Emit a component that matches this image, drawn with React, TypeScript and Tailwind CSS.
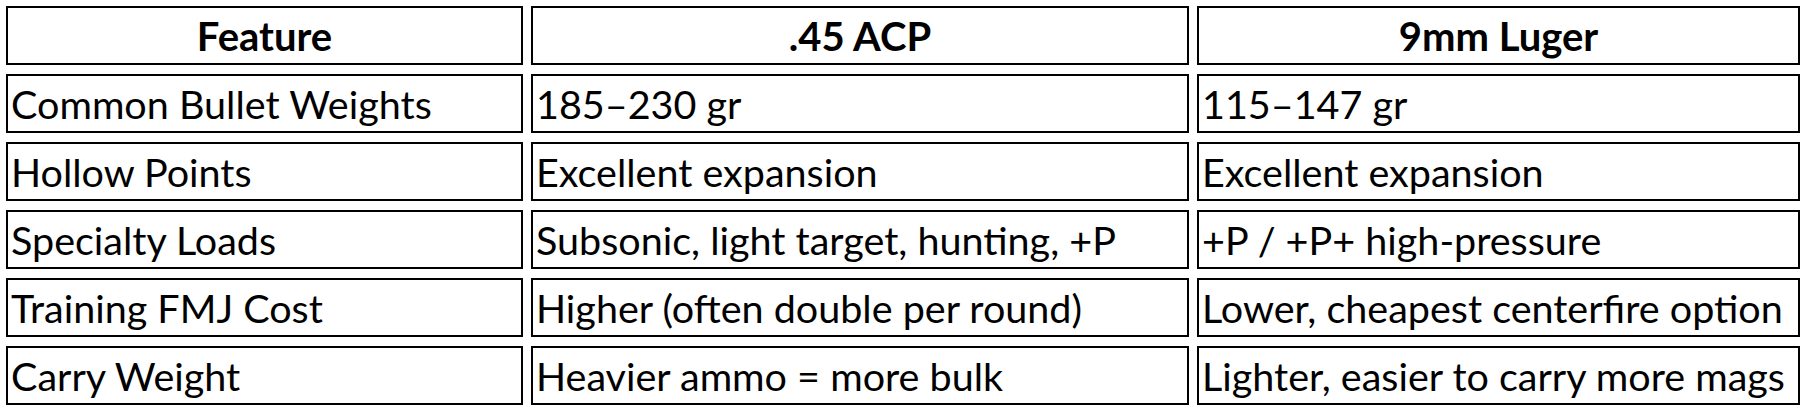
const header = ["Feature", ".45 ACP", "9mm Luger"];

const rows = [
  ["Common Bullet Weights", "185–230 gr", "115–147 gr"],
  ["Hollow Points", "Excellent expansion", "Excellent expansion"],
  ["Specialty Loads", "Subsonic, light target, hunting, +P", "+P / +P+ high-pressure"],
  ["Training FMJ Cost", "Higher (often double per round)", "Lower, cheapest centerfire option"],
  ["Carry Weight", "Heavier ammo = more bulk", "Lighter, easier to carry more mags"],
];

export default function App() {
  return (
    <div className="w-[1810px] h-[416px] bg-white pl-[6px] pt-[6px] font-['Lato',sans-serif] text-black">
      <div className="grid grid-cols-[517px_658px_603px] auto-rows-[59px] gap-x-[8px] gap-y-[9px]">
        {header.map((h) => (
          <div
            key={h}
            className="border-2 border-black flex items-center justify-center text-[40px] font-bold leading-none"
          >
            {h}
          </div>
        ))}
        {rows.map((r) =>
          r.map((c, i) => (
            <div
              key={r[0] + i}
              className="border-2 border-black flex items-center pl-[3px] text-[39.5px] leading-none whitespace-nowrap overflow-hidden"
            >
              {c}
            </div>
          ))
        )}
      </div>
    </div>
  );
}
